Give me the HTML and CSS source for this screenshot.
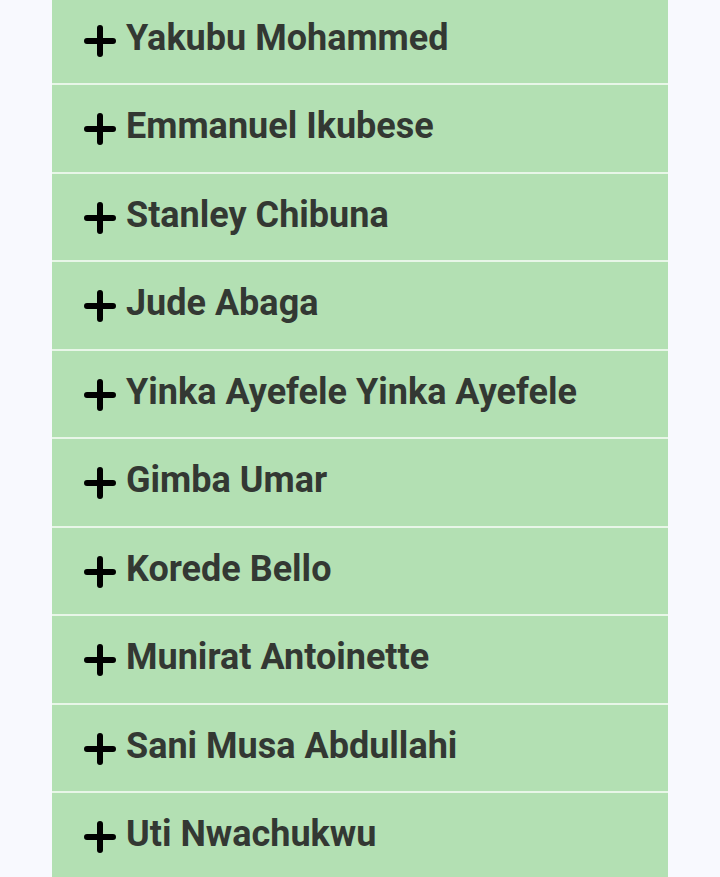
FILE: index.html
```html
<!DOCTYPE html>
<html lang="en">
<head>
<meta charset="UTF-8">
<meta name="viewport" content="width=device-width, initial-scale=1.0">
<title>Members</title>
<link rel="stylesheet" href="styles.css">
</head>
<body>

<!-- accordion list of members -->
<div class="accordion">
  <div class="item"><svg class="plus" viewBox="0 0 32 32"><path d="M16 3v26M3 16h26"/></svg><span>Yakubu Mohammed</span></div>
  <div class="item"><svg class="plus" viewBox="0 0 32 32"><path d="M16 3v26M3 16h26"/></svg><span>Emmanuel Ikubese</span></div>
  <div class="item"><svg class="plus" viewBox="0 0 32 32"><path d="M16 3v26M3 16h26"/></svg><span>Stanley Chibuna</span></div>
  <div class="item"><svg class="plus" viewBox="0 0 32 32"><path d="M16 3v26M3 16h26"/></svg><span>Jude Abaga</span></div>
  <div class="item"><svg class="plus" viewBox="0 0 32 32"><path d="M16 3v26M3 16h26"/></svg><span>Yinka Ayefele Yinka Ayefele</span></div>
  <div class="item"><svg class="plus" viewBox="0 0 32 32"><path d="M16 3v26M3 16h26"/></svg><span>Gimba Umar</span></div>
  <div class="item"><svg class="plus" viewBox="0 0 32 32"><path d="M16 3v26M3 16h26"/></svg><span>Korede Bello</span></div>
  <div class="item"><svg class="plus" viewBox="0 0 32 32"><path d="M16 3v26M3 16h26"/></svg><span>Munirat Antoinette</span></div>
  <div class="item"><svg class="plus" viewBox="0 0 32 32"><path d="M16 3v26M3 16h26"/></svg><span>Sani Musa Abdullahi</span></div>
  <div class="item"><svg class="plus" viewBox="0 0 32 32"><path d="M16 3v26M3 16h26"/></svg><span>Uti Nwachukwu</span></div>
</div>

</body>
</html>
```

FILE: styles.css
```css
body {
  font-family: Roboto, "Liberation Sans", sans-serif;
  margin: 0;
  padding: 0;
  background-color: #f8f9fe;
  overflow: hidden;
}

.accordion {
  width: 616px;
  margin: -3.5px auto 0;
}

.item {
  display: flex;
  align-items: flex-start;
  gap: 10px;
  box-sizing: border-box;
  height: 88.5px;
  padding: 20px 0 0 32px;
  background-color: #b3e0b3;
  border-bottom: 2px solid #e8f6e8;
  font-size: 36px;
  font-weight: 700;
  color: #333833;
}

.plus {
  width: 32px;
  height: 32px;
  margin-top: 8px;
  flex-shrink: 0;
}

.plus path {
  fill: none;
  stroke: #000;
  stroke-width: 6;
  stroke-linecap: round;
}
```
